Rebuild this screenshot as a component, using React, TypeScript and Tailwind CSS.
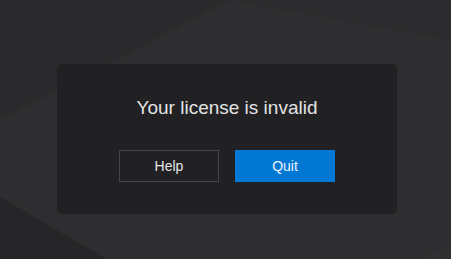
export default function App() {
    return (
        <div className="relative w-[451px] h-[259px] overflow-hidden bg-[#2c2c2e]" style={{ fontFamily: '"Liberation Sans", Arial, sans-serif' }}>
            {/* faint background shapes */}
            <svg className="absolute inset-0" width="451" height="259" viewBox="0 0 451 259">
                <polygon points="0,0 230,0 451,40 451,259 0,259" fill="#2e2e30" />
                <polygon points="0,0 230,0 0,120" fill="#2a2a2c" />
                <polygon points="0,197 106,259 0,259" fill="#262628" />
                <polygon points="451,246 451,259 420,259" fill="#303032" />
            </svg>

            <div className="relative pt-[64px] pl-[57px]">
                <div className="w-[340px] h-[150px] rounded-[5px] bg-[#212123] flex flex-col items-center">
                    <h1 className="mt-[32px] text-[19px] leading-[24px] text-[#e3e3e3]">Your license is invalid</h1>
                    <div className="mt-[30px] flex gap-[16px]">
                        <button className="w-[100px] h-[32px] border border-[#454547] text-[14px] text-[#e6e6e6]">
                            Help
                        </button>
                        <button className="w-[100px] h-[32px] bg-[#0078d4] text-[14px] text-[#eef4fa]">
                            Quit
                        </button>
                    </div>
                </div>
            </div>
        </div>
    );
}
